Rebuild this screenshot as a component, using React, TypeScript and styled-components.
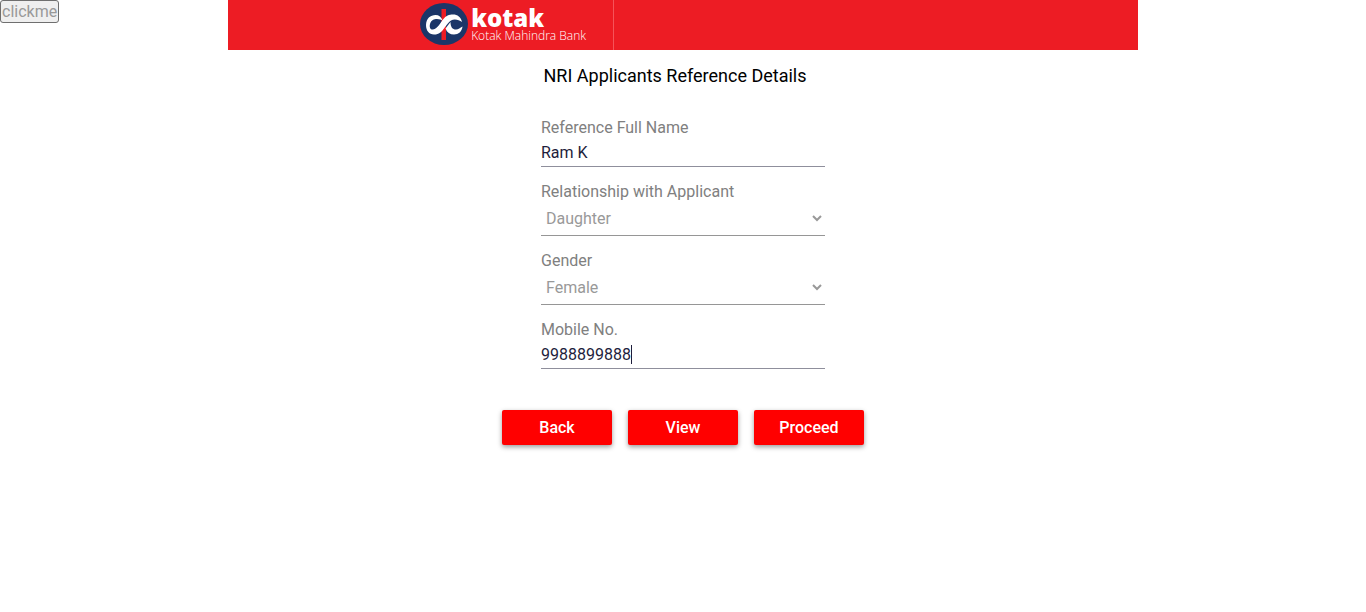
import React, { useId, useState } from "react";
import styled, { createGlobalStyle } from "styled-components";

const GlobalStyle = createGlobalStyle`
  *, *::before, *::after { box-sizing: border-box; }
  body {
    margin: 0;
    background: #fff;
    color: #000;
    font-family: Roboto, "Liberation Sans", sans-serif;
    font-size: 16px;
    line-height: 24px;
  }
  button, input, select { font: inherit; }
`;

const Page = styled.div`
  position: relative;
`;

const DebugButton = styled.button`
  position: absolute;
  top: 0;
  left: 0;
  height: 23px;
  padding: 0 1px;
  border: 1px solid #6f6f6f;
  border-radius: 3px;
  background: #efefef;
  color: #999;
  line-height: 20px;
`;

const Shell = styled.div`
  width: 66.6%;
  margin: 0 auto;
`;

const Header = styled.header`
  display: flex;
  height: 50px;
  background: #ed1c24;
`;

const Brand = styled.div`
  display: flex;
  align-items: flex-start;
  justify-content: flex-end;
  gap: 3px;
  width: 386px;
  padding: 3px 28px 0 0;
  border-right: 1px solid #f5545a;
  color: #fff;
`;

const BrandName = styled.div`
  display: flex;
  flex-direction: column;
  width: 114px;
  font-family: "Open Sans", "Noto Sans", sans-serif;
  white-space: nowrap;
`;

const BrandTitle = styled.span`
  font-size: 24px;
  font-weight: 800;
  line-height: 29px;
`;

const BrandSubtitle = styled.span`
  font-size: 12px;
  font-weight: 300;
  line-height: 8px;
`;

const Form = styled.form`
  display: flex;
  flex-direction: column;
  align-items: center;
`;

const Title = styled.h1`
  margin: 14px 16px 28px 0;
  font-size: 18px;
  font-weight: 400;
  line-height: 24px;
`;

const Fields = styled.div`
  display: flex;
  flex-direction: column;
  gap: 13px;
  width: 284px;
`;

const Field = styled.div`
  display: flex;
  flex-direction: column;
`;

const Label = styled.label`
  color: #808080;
`;

const Line = styled.div<{ $tall?: boolean }>`
  display: flex;
  align-items: flex-start;
  height: ${(p) => (p.$tall ? 32 : 27)}px;
  border-bottom: 1px solid ${(p) => (p.$tall ? "#969696" : "#8f8f9c")};
`;

const TextInput = styled.input<{ $active?: boolean }>`
  height: 19px;
  margin-top: 3px;
  padding: 0;
  border: 0;
  border-right: ${(p) => (p.$active ? "1px solid #1e1e3c" : "0")};
  outline: 0;
  background: transparent;
  color: #1e1e3c;
  caret-color: transparent;
  field-sizing: content;
`;

const Select = styled.select`
  width: 100%;
  height: 28px;
  padding: 0 1px;
  border: 0;
  outline: 0;
  background: transparent;
  color: #999;
`;

const Actions = styled.div`
  display: flex;
  gap: 16px;
  margin: 41px 0 16px;
`;

const ActionButton = styled.button`
  width: 110px;
  height: 35px;
  padding: 0;
  border: 0;
  border-radius: 2px;
  background: #f00;
  box-shadow: 0 2px 5px rgba(0, 0, 0, 0.4);
  color: #fff;
  font-weight: 500;
`;

function KotakMark() {
  return (
    <svg width="48" height="42" viewBox="0 0 48 42" aria-hidden="true">
      <ellipse cx="24" cy="21" rx="24" ry="21" fill="#1b3668" />
      <path d="M21.5 6h4.5v31h-4.5z" fill="#ed1c24" />
      <path
        d="M6 22C6 15.5 10.5 12 15.5 12C19 12 21.5 14 22.500 17.500C20.500 16 12 14 10 21C9 25 11 27 13 26.500C18 25.500 20 20 23 16.500C26 12.500 29 11.500 33 11.500C37.500 11.500 41 14 42 19C39 16.500 34 15.500 31 17.500C26.500 20.500 24.500 26 21 29C18.500 31 16.500 31.500 14 31.500C9 31.500 6 27.500 6 22Z"
        fill="#fff"
      />
      <path
        d="M25.500 25.500L30.500 19C30.500 24 32.500 26.500 36 26.500C38.500 26.500 40 24.500 42.500 23.500C42 28.500 38.500 31.500 34 31.500C30 31.500 27 29.500 25.500 25.500Z"
        fill="#fff"
      />
    </svg>
  );
}

function TextField({ label, initial, active }: { label: string; initial: string; active?: boolean }) {
  const id = useId();
  const [value, setValue] = useState(initial);
  return (
    <Field>
      <Label htmlFor={id}>{label}</Label>
      <Line>
        <TextInput id={id} $active={active} value={value} onChange={(e) => setValue(e.target.value)} />
      </Line>
    </Field>
  );
}

function SelectField({ label, options }: { label: string; options: string[] }) {
  const id = useId();
  return (
    <Field>
      <Label htmlFor={id}>{label}</Label>
      <Line $tall>
        <Select id={id} defaultValue={options[0]}>
          {options.map((o) => (
            <option key={o}>{o}</option>
          ))}
        </Select>
      </Line>
    </Field>
  );
}

export default function App() {
  return (
    <Page>
      <GlobalStyle />
      <DebugButton type="button">clickme</DebugButton>
      <Shell>
        <Header>
          <Brand>
            <KotakMark />
            <BrandName>
              <BrandTitle>kotak</BrandTitle>
              <BrandSubtitle>Kotak Mahindra Bank</BrandSubtitle>
            </BrandName>
          </Brand>
        </Header>
        <Form onSubmit={(e) => e.preventDefault()}>
          <Title>NRI Applicants Reference Details</Title>
          <Fields>
            <TextField label="Reference Full Name" initial="Ram K" />
            <SelectField label="Relationship with Applicant" options={["Daughter"]} />
            <SelectField label="Gender" options={["Female"]} />
            <TextField label="Mobile No." initial="9988899888" active />
          </Fields>
          <Actions>
            <ActionButton type="button">Back</ActionButton>
            <ActionButton type="button">View</ActionButton>
            <ActionButton type="submit">Proceed</ActionButton>
          </Actions>
        </Form>
      </Shell>
    </Page>
  );
}
